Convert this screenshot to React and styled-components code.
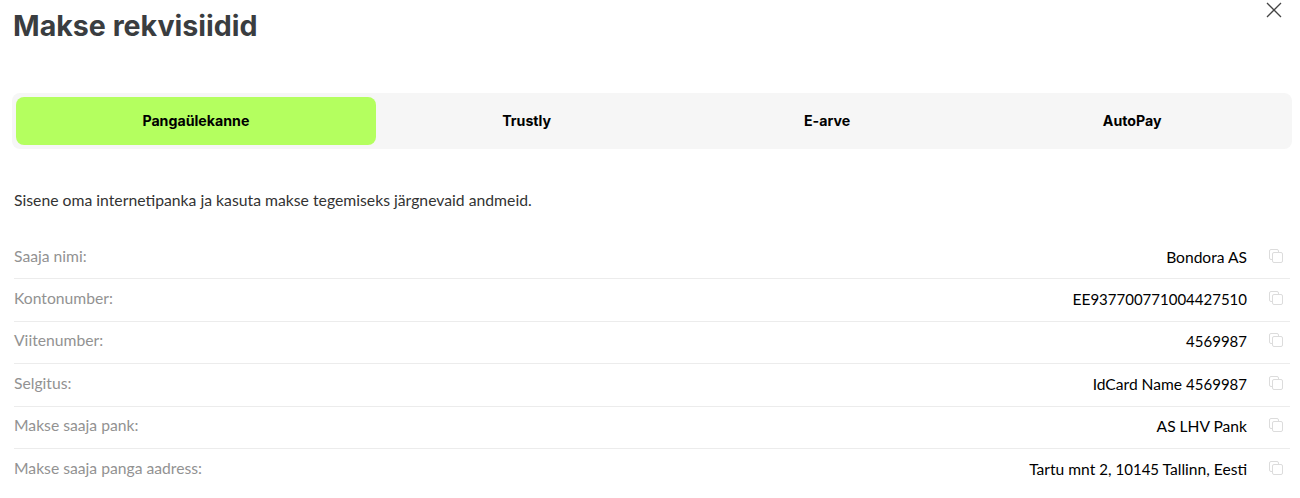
import React from 'react';
import styled, { createGlobalStyle } from 'styled-components';

const GlobalStyle = createGlobalStyle`
    html, body {
        margin: 0;
        padding: 0;
        background: #fff;
        overflow: hidden;
        font-family: Lato, "Liberation Sans", sans-serif;
    }
`;

const Modal = styled.div`
    position: relative;
    width: 1300px;
    height: 498px;
    box-sizing: border-box;
    padding: 6px 8px 0 12px;
    overflow: hidden;
`;

const Title = styled.h1`
    margin: 0 0 47px 1px;
    font-family: Inter, sans-serif;
    font-size: 28.6px;
    line-height: 40px;
    font-weight: 700;
    color: #3a3d40;
`;

const CloseButton = styled.button`
    position: absolute;
    top: 2px;
    right: 18px;
    width: 16px;
    height: 16px;
    padding: 0;
    border: 0;
    background: none;
    color: #444;
    svg { display: block; }
`;

const TabBar = styled.div`
    display: flex;
    height: 56px;
    box-sizing: border-box;
    padding: 4px;
    border-radius: 8px;
    background: #f6f6f6;
`;

const Tab = styled.div`
    flex: 1 1 auto;
    display: flex;
    align-items: center;
    justify-content: center;
    padding-bottom: 2px;
    box-sizing: border-box;
    border-radius: 8px;
    font-family: Inter, sans-serif;
    font-size: 14.2px;
    font-weight: 700;
    color: #000;
    background: ${({ $active }) => ($active ? '#b4ff5f' : 'transparent')};
`;

const Intro = styled.p`
    margin: 41px 0 27px 2px;
    font-size: 15.75px;
    line-height: 20px;
    color: #333;
`;

const List = styled.div`
    margin-left: 2px;
    margin-right: 2px;
`;

const Row = styled.div`
    display: flex;
    align-items: center;
    height: 42.4px;
    box-sizing: border-box;
    padding-bottom: 4px;
    border-bottom: 1px solid ${({ $last }) => ($last ? 'transparent' : '#ececec')};
    font-size: 15.7px;
`;

const Label = styled.span`
    color: #929292;
`;

const Value = styled.span`
    margin-left: auto;
    margin-top: 2px;
    font-size: 15.6px;
    color: #000;
`;

const Digits = styled.span`
    font-size: 15px;
`;

const CopyIcon = styled.svg`
    flex: none;
    width: 14px;
    height: 14px;
    margin: 0 7px 0 22px;
    color: #dcdcdc;
`;

const rows = [
    ['Saaja nimi:', 'Bondora AS'],
    ['Kontonumber:', 'EE937700771004427510'],
    ['Viitenumber:', '4569987'],
    ['Selgitus:', 'IdCard Name 4569987'],
    ['Makse saaja pank:', 'AS LHV Pank'],
    ['Makse saaja panga aadress:', 'Tartu mnt 2, 10145 Tallinn, Eesti'],
];

const tabs = ['Pangaülekanne', 'Trustly', 'E-arve', 'AutoPay'];

const withDigits = (text) =>
    text.split(/(\d+)/).map((part, i) => (i % 2 ? <Digits key={i}>{part}</Digits> : part));

const App = () => {
    return (
        <>
            <GlobalStyle />
            <Modal>
                <Title>Makse rekvisiidid</Title>
                <CloseButton aria-label="Sulge">
                    <svg width="16" height="16" viewBox="0 0 16 16" fill="none" stroke="currentColor" strokeWidth="1.3">
                        <path d="M1 1l14 14M15 1L1 15" />
                    </svg>
                </CloseButton>
                <TabBar>
                    {tabs.map((tab, i) => (
                        <Tab key={tab} $active={i === 0}>{tab}</Tab>
                    ))}
                </TabBar>
                <Intro>Sisene oma internetipanka ja kasuta makse tegemiseks järgnevaid andmeid.</Intro>
                <List>
                    {rows.map(([label, value], i) => (
                        <Row key={label} $last={i === rows.length - 1}>
                            <Label>{label}</Label>
                            <Value>{withDigits(value)}</Value>
                            <CopyIcon viewBox="0 0 14 14" fill="none" stroke="currentColor" strokeWidth="1">
                                <path d="M3.5 10.5H2a1.5 1.5 0 0 1-1.5-1.5V2A1.5 1.5 0 0 1 2 .5h6A1.5 1.5 0 0 1 9.5 2v1" />
                                <rect x="3.5" y="3.5" width="10" height="10" rx="1.5" />
                            </CopyIcon>
                        </Row>
                    ))}
                </List>
            </Modal>
        </>
    );
};

export default App;
